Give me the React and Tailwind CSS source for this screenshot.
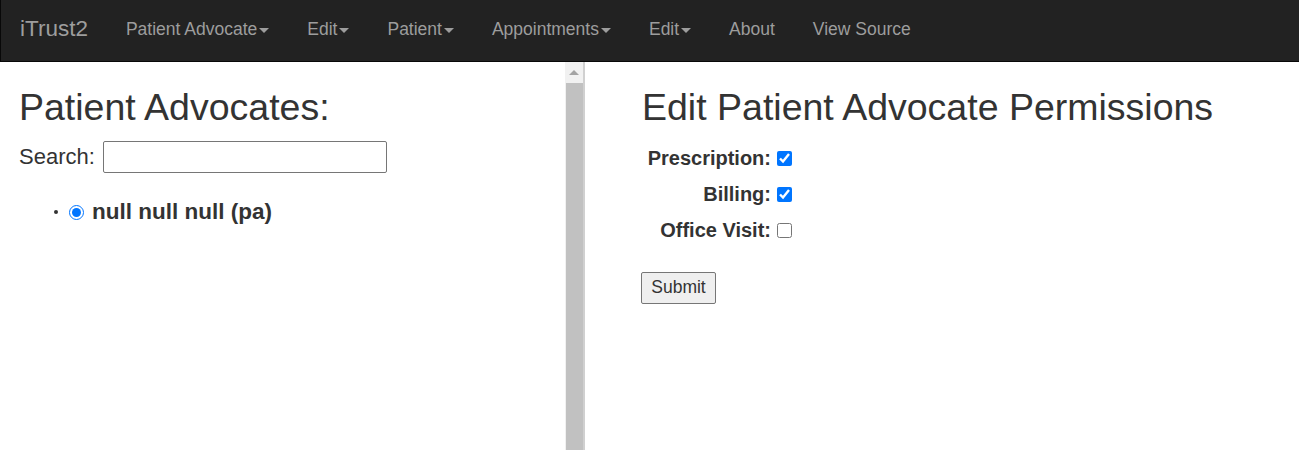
import { useState } from 'react';

const NAV = [
  { label: 'Patient Advocate', caret: true },
  { label: 'Edit', caret: true },
  { label: 'Patient', caret: true },
  { label: 'Appointments', caret: true },
  { label: 'Edit', caret: true },
  { label: 'About' },
  { label: 'View Source' },
];

const PERMS = [
  { key: 'prescription', label: 'Prescription:' },
  { key: 'billing', label: 'Billing:' },
  { key: 'officeVisit', label: 'Office Visit:' },
];

const Caret = () => (
  <span className="inline-block ml-[2px] w-0 h-0 border-l-[5px] border-r-[5px] border-t-[5px] border-l-transparent border-r-transparent border-t-[#9d9d9d] align-middle" />
);

export default function App() {
  const [search, setSearch] = useState('');
  const [perms, setPerms] = useState({ prescription: true, billing: true, officeVisit: false });

  return (
    <div className="w-[1299px] h-[450px] overflow-hidden bg-white text-[#333] font-['Liberation_Sans',Arial,sans-serif] flex flex-col">
      {/* navbar */}
      <div className="h-[62px] shrink-0 bg-[#222] border-b border-l border-[#080808] flex items-center pb-[2px]">
        <span className="pl-[19px] pr-[19px] text-[22.5px] text-[#9d9d9d] leading-none">iTrust2</span>
        {NAV.map((n, i) => (
          <span key={i} className="px-[19px] text-[17.5px] text-[#9d9d9d] leading-none whitespace-nowrap">
            {n.label}{n.caret && <Caret />}
          </span>
        ))}
      </div>

      <div className="flex flex-1 min-h-0">
        {/* left pane */}
        <div className="w-[565px] shrink-0 pl-[19px]">
          <h2 className="mt-[25px] text-[37.5px] leading-[41px] font-normal">Patient Advocates:</h2>
          <div className="mt-[13px] flex items-center gap-[8px]">
            <span className="text-[22px] leading-none">Search:</span>
            <input
              value={search}
              onChange={(e) => setSearch(e.target.value)}
              className="w-[284px] h-[32px] border border-[#767676] rounded-[2px] px-1 outline-none"
            />
          </div>
          <ul className="mt-[28px] pl-[50px] list-disc text-[14px]">
            <li className="marker:text-[#333]">
              <label className="inline-flex items-center gap-[8px] text-[22.5px] font-bold leading-none align-middle">
                <input type="radio" name="pa" defaultChecked className="w-[15px] h-[15px] accent-[#0075ff] m-0" />
                null null null (pa)
              </label>
            </li>
          </ul>
        </div>

        {/* scrollbar */}
        <div className="w-[18px] shrink-0 bg-[#f1f1f1] flex flex-col items-center">
          <div className="h-[21px] flex items-center justify-center">
            <span className="w-0 h-0 border-l-[5px] border-r-[5px] border-b-[5px] border-l-transparent border-r-transparent border-b-[#a3a3a3]" />
          </div>
          <div className="w-[17px] flex-1 bg-[#c1c1c1]" />
        </div>
        <div className="w-[2px] shrink-0 bg-[#d0d0d0]" />

        {/* right pane */}
        <div className="flex-1 pl-[57px]">
          <h2 className="mt-[25px] text-[37.5px] leading-[41px] font-normal">Edit Patient Advocate Permissions</h2>
          <div className="mt-[20px] grid grid-cols-[129px_auto] gap-x-[6px] gap-y-[16px] items-center justify-start">
            {PERMS.map((p) => (
              <div key={p.key} className="contents">
                <span className="text-right text-[20px] font-bold leading-[20px]">{p.label}</span>
                <input
                  type="checkbox"
                  checked={perms[p.key]}
                  onChange={() => setPerms((s) => ({ ...s, [p.key]: !s[p.key] }))}
                  className="w-[15px] h-[15px] accent-[#0075ff] m-0"
                />
              </div>
            ))}
          </div>
          <button className="mt-[32px] -ml-[1px] w-[75px] h-[32px] bg-[#efefef] border border-[#767676] rounded-[2px] text-[17.5px] leading-none">
            Submit
          </button>
        </div>
      </div>
    </div>
  );
}
